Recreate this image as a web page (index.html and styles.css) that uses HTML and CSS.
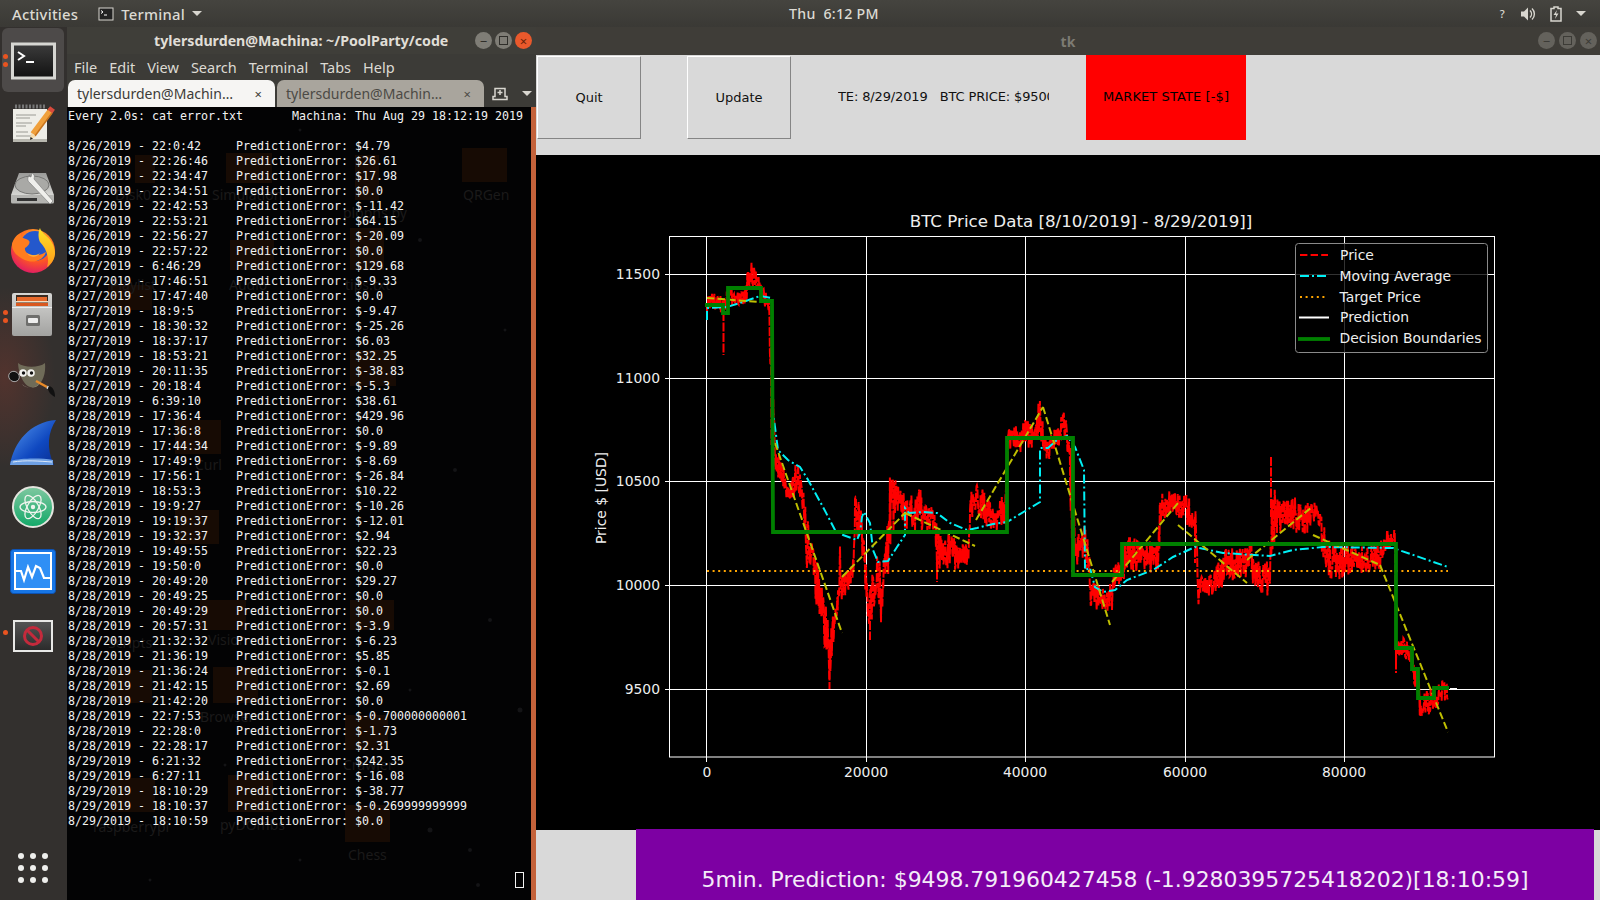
FILE: index.html
```html
<!DOCTYPE html>
<html lang="en">
<head>
<meta charset="UTF-8" />
<title>tk</title>
<link rel="stylesheet" href="styles.css">
</head>
<body>

<!-- gnome top bar -->
<header class="topbar">
  <span class="activities">Activities</span>
  <span class="appmenu">
    <svg width="16" height="14" viewBox="0 0 16 14"><rect x="1" y="1" width="14" height="12" fill="#222" stroke="#d8d6cf"/><path d="M3 3.5l2 1.5-2 1.5M6 8h3" fill="none" stroke="#fff"/></svg>
    Terminal
    <i class="caret"></i>
  </span>
  <span class="clock">Thu&nbsp; 6:12 PM</span>
  <span class="status">
    <span class="help">?</span>
    <svg width="16" height="16" viewBox="0 0 16 16"><path d="M1 5.5h3l4-4v13l-4-4H1z" fill="#d8d6cf"/><path d="M10 4.5c2 2 2 5 0 7M12 2.5c3.2 3 3.2 8 0 11" fill="none" stroke="#d8d6cf" stroke-width="1.4"/></svg>
    <svg width="14" height="16" viewBox="0 0 14 16"><path d="M5 1h4v1.5h3V15H2V2.500h3z" fill="none" stroke="#d8d6cf" stroke-width="1.500"/><path d="M8 4L4.500 9h2.500l-1 4 3.500-5.500H7z" fill="#d8d6cf"/></svg>
    <i class="caret"></i>
  </span>
</header>

<div class="desk">

  <!-- dock -->
  <nav class="dock">
    <div class="slot active">
      <div class="pips"><i></i><i></i></div>
      <svg viewBox="0 0 67 64"><defs><linearGradient id="tg" x1="0" y1="0" x2="0" y2="1"><stop offset="0" stop-color="#3c3c3c"/><stop offset="1" stop-color="#111"/></linearGradient></defs><rect x="12.500" y="16" width="42" height="34" fill="url(#tg)" stroke="#d6d6d2" stroke-width="3"/><path d="M18 24l6 4-6 4" fill="none" stroke="#fff" stroke-width="2"/><path d="M26 34h8" stroke="#fff" stroke-width="2"/></svg>
    </div>
    <div class="slot">
      <svg viewBox="0 0 67 64"><rect x="13" y="17" width="34" height="33" fill="#efeee8"/><rect x="13" y="47" width="34" height="3" fill="#b9b8b0"/><path d="M15 14.500h30" stroke="#777" stroke-width="4" stroke-dasharray="2 1.500"/><path d="M16 23h20M16 26h14M16 31h16M16 34h10M16 40h12M16 44h18" stroke="#9a9a94"/><path d="M33 42L51 18" stroke="#f0a03c" stroke-width="6"/><path d="M35 44L52 21" stroke="#c8741e" stroke-width="1.500"/><path d="M30 48l1-7 5 3.500z" fill="#f3dcb0"/><path d="M30 48l.5-3 2.500 1.500z" fill="#222"/><path d="M50 19.500l2.500-3.500" stroke="#d84a3c" stroke-width="6"/></svg>
    </div>
    <div class="slot">
      <svg viewBox="0 0 67 64"><defs><linearGradient id="dg" x1="0" y1="0" x2="0" y2="1"><stop offset="0" stop-color="#9a9a98"/><stop offset="1" stop-color="#d6d6d3"/></linearGradient></defs><path d="M19 17h27l8 22H11z" fill="url(#dg)"/><path d="M11 39h43v7a1.500 1.500 0 0 1-1.500 1.500h-40A1.500 1.500 0 0 1 11 46z" fill="#b4b4b1"/><path d="M17 42h20v3H17z" fill="#333"/><ellipse cx="32" cy="29" rx="17" ry="9" fill="#a9a9a6" stroke="#777775"/><path d="M30 19c-3 2-3 6 0 8l20 21 3-3-19-22c1-3 0-5-2-6l-1 4-3-1z" fill="#efefec" stroke="#777" stroke-width=".6"/></svg>
    </div>
    <div class="slot">
      <svg viewBox="0 0 67 64"><defs><radialGradient id="fg" cx=".6" cy=".25" r=".85"><stop offset="0" stop-color="#ffc02e"/><stop offset=".55" stop-color="#ff5a1f"/><stop offset="1" stop-color="#d90d75"/></radialGradient><linearGradient id="fy" x1="0" y1="0" x2="0" y2="1"><stop offset="0" stop-color="#ffe226"/><stop offset="1" stop-color="#ff9a1a"/></linearGradient></defs><circle cx="33" cy="31" r="22" fill="url(#fg)"/><circle cx="35" cy="26" r="15" fill="#2458cc"/><path d="M40 8c1 6 14 10 15 24 .3 6-3 12-8 15 3-9-1-19-7-25-2-4-2-10 0-14z" fill="url(#fy)"/><path d="M12 24c2-7 6-10 9-11-1 3 1 5 5 6 7 2 2 7-1 9-1 5 6 8 13 7 4-.5 6-2 8-3-2 7-10 11-18 9-8-2-17-9-16-17z" fill="#ff7d1f"/><path d="M27 33c4 3 9 3 13 0-3 5-10 5-13 0z" fill="#ffb13a"/></svg>
    </div>
    <div class="slot">
      <div class="pips"><i></i><i></i></div>
      <svg viewBox="0 0 67 64"><defs><linearGradient id="cg" x1="0" y1="0" x2="0" y2="1"><stop offset="0" stop-color="#d6d6d4"/><stop offset="1" stop-color="#a2a2a0"/></linearGradient></defs><rect x="12" y="9" width="40" height="43" rx="2" fill="url(#cg)"/><rect x="16" y="11" width="32" height="10" fill="#3a2a20"/><rect x="17" y="13" width="30" height="4" fill="#e86a2c"/><rect x="16" y="17" width="32" height="1.500" fill="#f4dcc0"/><rect x="16" y="19" width="32" height="3" fill="#d9581f"/><rect x="12" y="23" width="40" height="1" fill="#eee"/><rect x="26" y="31" width="14" height="11" rx="1.500" fill="#6f6f6d"/><rect x="28" y="34" width="10" height="5" rx="1" fill="#eee"/></svg>
    </div>
    <div class="slot">
      <svg viewBox="0 0 67 64"><path d="M18 15c6 5 21 5 27 0 1 10-2 20-9 24-9 3-17-8-18-24z" fill="#6f6b58"/><path d="M22 36c5 5 12 5 17 0-3 5-14 5-17 0z" fill="#a8a490"/><ellipse cx="14" cy="28.500" rx="5.500" ry="5" fill="#111" stroke="#bbb" stroke-width=".8" transform="rotate(35 14 28.500)"/><circle cx="23" cy="25" r="3.800" fill="#f2f2ee"/><circle cx="31" cy="25" r="3.800" fill="#f2f2ee"/><circle cx="23.500" cy="25" r="1.700" fill="#111"/><circle cx="31.500" cy="25" r="1.700" fill="#111"/><path d="M36 33l11 6" stroke="#e88a28" stroke-width="2.500"/><path d="M47 39l2 1" stroke="#ddd" stroke-width="3"/><path d="M49 38c4 1 6 5 6 11-4-2-7-5-7-9z" fill="#111"/></svg>
    </div>
    <div class="slot">
      <svg viewBox="0 0 67 64"><defs><linearGradient id="sg" x1="0" y1="0" x2="1" y2="1"><stop offset="0" stop-color="#5a9cf0"/><stop offset=".6" stop-color="#0f48c0"/><stop offset="1" stop-color="#0a2e90"/></linearGradient></defs><path d="M10 53C14 30 30 10 56 8c-8 12-10 28-2 45z" fill="url(#sg)"/><path d="M11 49c10-3 30-3 42-1v5H10z" fill="#6ea0e4"/><path d="M13 50c12-2 26-1 39 0" stroke="#dce8f8" fill="none"/></svg>
    </div>
    <div class="slot">
      <svg viewBox="0 0 67 64"><defs><linearGradient id="ag" x1="0" y1="0" x2="0" y2="1"><stop offset="0" stop-color="#7fc8a0"/><stop offset="1" stop-color="#12a868"/></linearGradient></defs><circle cx="33" cy="31" r="20" fill="url(#ag)" stroke="#e4e4de" stroke-width="2"/><g fill="none" stroke="#f0f4ee" stroke-width="1.300"><ellipse cx="33" cy="31" rx="13" ry="5.500"/><ellipse cx="33" cy="31" rx="13" ry="5.500" transform="rotate(60 33 31)"/><ellipse cx="33" cy="31" rx="13" ry="5.500" transform="rotate(-60 33 31)"/></g><circle cx="33" cy="31" r="2.200" fill="#f0f4ee"/></svg>
    </div>
    <div class="slot">
      <svg viewBox="0 0 67 64"><rect x="10.500" y="9.500" width="45" height="44" rx="3" fill="#1776e6" stroke="#0d52b4"/><rect x="15" y="13" width="36" height="36" fill="#2f8ff5" stroke="#fff" stroke-width="2"/><path d="M15 31h6l3 9 4-13 4 10 4-11 4 2 4 10h7" fill="none" stroke="#fff" stroke-width="2.200"/></svg>
    </div>
    <div class="slot">
      <div class="pips"><i></i></div>
      <svg viewBox="0 0 67 64"><defs><linearGradient id="bg" x1="0" y1="0" x2="0" y2="1"><stop offset="0" stop-color="#555"/><stop offset="1" stop-color="#2a2a2a"/></linearGradient></defs><rect x="14" y="17" width="38" height="30" fill="url(#bg)" stroke="#e8e8e6" stroke-width="2"/><circle cx="33" cy="32" r="8.500" fill="none" stroke="#c42a3c" stroke-width="3"/><path d="M27 26l12 12" stroke="#c42a3c" stroke-width="3"/></svg>
    </div>
    <div class="apps">
      <i></i><i></i><i></i><i></i><i></i><i></i><i></i><i></i><i></i>
    </div>
  </nav>

  <!-- terminal window -->
  <section class="term">
    <div class="term-title">
      <span class="term-name">tylersdurden@Machina: ~/PoolParty/code</span>
      <span class="wbtns">
        <b class="wbtn">&minus;</b>
        <b class="wbtn"><i class="sq"></i></b>
        <b class="wbtn close">&times;</b>
      </span>
    </div>
    <div class="term-menu">
      <span>File</span><span>Edit</span><span>View</span><span>Search</span><span>Terminal</span><span>Tabs</span><span>Help</span>
    </div>
    <div class="tabs">
      <div class="tab on"><span>tylersdurden@Machin…</span><em>×</em></div>
      <div class="tab"><span>tylersdurden@Machin…</span><em>×</em></div>
      <svg class="newtab" width="16" height="16" viewBox="0 0 16 16"><path d="M3 2.500h10v8H15v3H1v-3h2z" fill="none" stroke="#d8d6cf" stroke-width="1.500"/><path d="M8 4v5M5.500 6.500h5" stroke="#d8d6cf" stroke-width="1.500"/></svg>
      <i class="caret tabcaret"></i>
    </div>
    <div class="term-body">
      <!-- desktop icons showing through the transparent terminal -->
      <svg class="ghost" viewBox="67 107 464 793">
        <g class="gs">
          <circle cx="300" cy="130" r="1.500"/><circle cx="420" cy="240" r="2"/><circle cx="505" cy="330" r="1.500"/>
          <circle cx="130" cy="400" r="1.500"/><circle cx="455" cy="470" r="2"/><circle cx="300" cy="560" r="1.500"/>
          <circle cx="490" cy="620" r="2"/><circle cx="410" cy="690" r="1.500"/><circle cx="520" cy="710" r="2.500"/>
          <circle cx="225" cy="765" r="1.500"/><circle cx="430" cy="830" r="2.500"/><circle cx="470" cy="850" r="2"/>
          <circle cx="150" cy="880" r="1.500"/><circle cx="300" cy="860" r="1.500"/><circle cx="478" cy="885" r="2"/>
        </g>
        <g class="gf">
          <rect x="462" y="148" width="45" height="34"/><rect x="226" y="153" width="46" height="30"/>
          <rect x="135" y="155" width="20" height="28"/><rect x="355" y="155" width="24" height="45"/>
          <rect x="108" y="670" width="44" height="33"/><rect x="213" y="667" width="45" height="36"/>
          <rect x="345" y="715" width="43" height="35"/><rect x="110" y="778" width="45" height="34"/>
          <rect x="228" y="775" width="45" height="37"/><rect x="345" y="805" width="45" height="37"/>
          <rect x="108" y="285" width="44" height="25"/><rect x="230" y="240" width="44" height="30"/>
          <rect x="350" y="228" width="34" height="42"/><rect x="175" y="420" width="46" height="34"/>
          <rect x="175" y="510" width="44" height="34"/><rect x="350" y="350" width="46" height="36"/>
          <rect x="200" y="600" width="46" height="30"/><rect x="350" y="600" width="44" height="30"/>
        </g>
        <g class="gt">
          <text x="115" y="200">Disk0</text><text x="212" y="200">Simulation</text><text x="463" y="200">QRGen</text>
          <text x="343" y="218">plophs.py</text><text x="110" y="290">Playlist</text><text x="229" y="290">Audio</text>
          <text x="345" y="290">tips.txt</text><text x="195" y="470">Curl</text><text x="108" y="648">Scripts</text>
          <text x="208" y="645">Vision</text><text x="200" y="722">Browser</text><text x="343" y="770">Crawler</text>
          <text x="93" y="832">raspberrypi</text><text x="220" y="830">pyDOmbs</text><text x="348" y="860">Chess</text>
        </g>
      </svg>
<pre class="term-text">Every 2.0s: cat error.txt       Machina: Thu Aug 29 18:12:19 2019

8/26/2019 - 22:0:42     PredictionError: $4.79
8/26/2019 - 22:26:46    PredictionError: $26.61
8/26/2019 - 22:34:47    PredictionError: $17.98
8/26/2019 - 22:34:51    PredictionError: $0.0
8/26/2019 - 22:42:53    PredictionError: $-11.42
8/26/2019 - 22:53:21    PredictionError: $64.15
8/26/2019 - 22:56:27    PredictionError: $-20.09
8/26/2019 - 22:57:22    PredictionError: $0.0
8/27/2019 - 6:46:29     PredictionError: $129.68
8/27/2019 - 17:46:51    PredictionError: $-9.33
8/27/2019 - 17:47:40    PredictionError: $0.0
8/27/2019 - 18:9:5      PredictionError: $-9.47
8/27/2019 - 18:30:32    PredictionError: $-25.26
8/27/2019 - 18:37:17    PredictionError: $6.03
8/27/2019 - 18:53:21    PredictionError: $32.25
8/27/2019 - 20:11:35    PredictionError: $-38.83
8/27/2019 - 20:18:4     PredictionError: $-5.3
8/28/2019 - 6:39:10     PredictionError: $38.61
8/28/2019 - 17:36:4     PredictionError: $429.96
8/28/2019 - 17:36:8     PredictionError: $0.0
8/28/2019 - 17:44:34    PredictionError: $-9.89
8/28/2019 - 17:49:9     PredictionError: $-8.69
8/28/2019 - 17:56:1     PredictionError: $-26.84
8/28/2019 - 18:53:3     PredictionError: $10.22
8/28/2019 - 19:9:27     PredictionError: $-10.26
8/28/2019 - 19:19:37    PredictionError: $-12.01
8/28/2019 - 19:32:37    PredictionError: $2.94
8/28/2019 - 19:49:55    PredictionError: $22.23
8/28/2019 - 19:50:0     PredictionError: $0.0
8/28/2019 - 20:49:20    PredictionError: $29.27
8/28/2019 - 20:49:25    PredictionError: $0.0
8/28/2019 - 20:49:29    PredictionError: $0.0
8/28/2019 - 20:57:31    PredictionError: $-3.9
8/28/2019 - 21:32:32    PredictionError: $-6.23
8/28/2019 - 21:36:19    PredictionError: $5.85
8/28/2019 - 21:36:24    PredictionError: $-0.1
8/28/2019 - 21:42:15    PredictionError: $2.69
8/28/2019 - 21:42:20    PredictionError: $0.0
8/28/2019 - 22:7:53     PredictionError: $-0.700000000001
8/28/2019 - 22:28:0     PredictionError: $-1.73
8/28/2019 - 22:28:17    PredictionError: $2.31
8/29/2019 - 6:21:32     PredictionError: $242.35
8/29/2019 - 6:27:11     PredictionError: $-16.08
8/29/2019 - 18:10:29    PredictionError: $-38.77
8/29/2019 - 18:10:37    PredictionError: $-0.269999999999
8/29/2019 - 18:10:59    PredictionError: $0.0</pre>
      <i class="cursor"></i>
      <i class="term-scroll"></i>
    </div>
  </section>

  <!-- tk window -->
  <section class="tk">
    <div class="tk-title">
      <span>tk</span>
      <span class="wbtns dim">
        <b class="wbtn">&minus;</b>
        <b class="wbtn"><i class="sq"></i></b>
        <b class="wbtn">&times;</b>
      </span>
    </div>
    <div class="toolbar">
      <button class="tkbtn">Quit</button>
      <button class="tkbtn">Update</button>
      <div class="info">TE: 8/29/2019   BTC PRICE: $9500.00</div>
      <div class="market">MARKET STATE [-$]</div>
    </div>
    <div class="plot">
      <svg class="chart" viewBox="536 155 1064 675">
        <g class="grid">
          <path d="M706.500 236V757M866.500 236V757M1025.500 236V757M1185.500 236V757M1344.500 236V757"/>
          <path d="M670 274.500H1495M670 378.500H1495M670 481.500H1495M670 585.500H1495M670 689.500H1495"/>
          <path d="M706.500 757v5M866.500 757v5M1025.500 757v5M1185.500 757v5M1344.500 757v5"/>
          <path d="M665 274.500h5M665 378.500h5M665 481.500h5M665 585.500h5M665 689.500h5"/>
          <rect x="669.500" y="236.500" width="825" height="520.500"/>
        </g>

        <path id="price" class="price"/>
        <path class="price" d="M723.500 312V355M829.500 640V689M881 590V622M870 600V640M937 560V582M1195 517V563M1271 457V517M1396 650V673"/>

        <polyline class="avg" points="707,320 707,308 727,307 743,302 760,296 772,298 773,413 775,427 778,450 788,460 800,467 807,478 823,507 835,530 843,535 857,540 860,533 862,517 864,512 870,523 873,550 878,562 888,561 897,547 905,535 905,508 909,513 923,512 937,513 950,523 967,530 977,528 993,524 1007,522 1040,502 1040,448 1048,448 1057,440 1067,436 1075,447 1084,470 1085,570 1090,568 1095,587 1103,592 1115,590 1127,580 1153,570 1173,557 1195,547 1223,553 1270,556 1293,550 1323,547 1393,548 1448,567"/>
        <path class="target" d="M707 571H1448"/>
        <g class="trend">
          <path d="M707 298L760 302"/>
          <path d="M775 443L842 633"/>
          <path d="M842 577L905 513"/>
          <path d="M905 513L975 546"/>
          <path d="M976 520L1043 407"/>
          <path d="M1043 407L1110 625"/>
          <path d="M1112 582L1178 503"/>
          <path d="M1178 525L1247 583"/>
          <path d="M1247 560L1312 507"/>
          <path d="M1313 535L1380 565"/>
          <path d="M1380 565L1448 732"/>
        </g>
        <path class="pred" d="M1450 689H1457"/>
        <polyline class="bounds" points="705,305 723,305 723,313 728,313 728,288 761,288 761,301 772,301 773,532 1007,532 1007,438 1073,438 1073,575 1122,575 1122,544 1396,544 1396,648 1412,648 1412,669 1418,669 1418,698 1434,698 1434,688 1449,688"/>

        <text class="title" x="1081" y="227">BTC Price Data [8/10/2019] - 8/29/2019]]</text>
        <text class="ylabel" transform="rotate(-90 606 498)" x="606" y="498">Price $ [USD]</text>
        <g class="tick ty">
          <text x="660" y="279">11500</text><text x="660" y="383">11000</text><text x="660" y="486">10500</text><text x="660" y="590">10000</text><text x="660" y="694">9500</text>
        </g>
        <g class="tick tx">
          <text x="707" y="777">0</text><text x="866" y="777">20000</text><text x="1025" y="777">40000</text><text x="1185" y="777">60000</text><text x="1344" y="777">80000</text>
        </g>

        <rect class="legend" x="1295.500" y="243.500" width="192" height="109" rx="3"/>
        <path class="price key" d="M1300 255H1328"/>
        <path class="avg" d="M1300 276H1328"/>
        <path class="target" d="M1300 297H1328"/>
        <path class="pred" d="M1299 317.500H1329"/>
        <path class="bounds" d="M1298 339H1330"/>
        <g class="tick">
          <text x="1340" y="260">Price</text><text x="1339.500" y="281">Moving Average</text><text x="1339.500" y="302">Target Price</text><text x="1340" y="322">Prediction</text><text x="1339.500" y="343">Decision Boundaries</text>
        </g>
      </svg>
    </div>
    <div class="predbar">
      <div class="predlabel">5min. Prediction: $9498.791960427458 (-1.9280395725418202)[18:10:59]</div>
    </div>
  </section>
</div>

<script src="chart.js"></script>
</body>
</html>
```

FILE: styles.css
```css
html, body {
  margin: 0;
  width: 1600px;
  height: 900px;
  overflow: hidden;
  background: #2c2a29;
}
body {
  display: flex;
  flex-direction: column;
  font-family: "Noto Sans", sans-serif;
}
i, b, em { font-style: normal; font-weight: normal; }

.caret {
  display: inline-block;
  width: 0;
  height: 0;
  border-left: 5px solid transparent;
  border-right: 5px solid transparent;
  border-top: 5px solid #d8d6cf;
}

/* top bar */
.topbar {
  height: 27px;
  flex: none;
  display: flex;
  align-items: center;
  background: linear-gradient(#45443f, #3a3935);
  color: #dcdad3;
  font-size: 14.800px;
  font-weight: 500;
  letter-spacing: .25px;
}
.activities { margin-left: 12px; }
.appmenu {
  margin-left: 20px;
  display: flex;
  align-items: center;
  gap: 7px;
}
.clock { margin-left: 587px; width: 90px; white-space: nowrap; font-size: 14.200px; }
.status {
  margin-left: auto;
  padding-right: 14px;
  display: flex;
  align-items: center;
  gap: 13px;
}
.help { font-size: 11px; margin-right: 2px; }

.desk {
  flex: 1;
  display: flex;
  min-height: 0;
}

/* dock */
.dock {
  width: 67px;
  flex: none;
  display: flex;
  flex-direction: column;
  padding-top: 1px;
  box-sizing: border-box;
  background:
    radial-gradient(ellipse 50px 90px at 5px 350px, rgba(120, 55, 45, .45), transparent),
    #33302e;
}
.slot {
  position: relative;
  height: 64px;
  flex: none;
  border-radius: 6px;
}
.slot svg { display: block; width: 67px; height: 64px; }
.slot.active {
  background: rgba(255, 255, 255, .13);
  margin: 0 3px 0 2px;
}
.slot.active svg { margin-left: -2px; }
.pips {
  position: absolute;
  left: 3px;
  top: 26px;
  display: flex;
  flex-direction: column;
  gap: 3px;
}
.slot.active .pips { left: 1px; }
.pips i {
  width: 5px;
  height: 5px;
  border-radius: 50%;
  background: #e95420;
}
.apps {
  margin: auto 0 17px 18px;
  display: grid;
  grid-template-columns: repeat(3, 6px);
  gap: 6px;
}
.apps i {
  width: 6px;
  height: 6px;
  border-radius: 50%;
  background: #eeeeec;
}

/* window buttons */
.wbtns {
  position: absolute;
  right: 3px;
  top: 5px;
  display: flex;
  gap: 4px;
}
.wbtn {
  width: 17px;
  height: 17px;
  border-radius: 50%;
  background: #7f7d76;
  color: #2f2e2a;
  font-size: 13px;
  line-height: 16px;
  text-align: center;
  display: flex;
  align-items: center;
  justify-content: center;
}
.wbtn.close { background: #e9592c; color: #6a2308; }
.sq {
  width: 7px;
  height: 7px;
  border: 1px solid #2f2e2a;
}
.dim .wbtn { background: #64625c; color: #3c3b36; }
.dim .sq { border-color: #3c3b36; }
.term-title .wbtns { right: 4px; gap: 3px; }

/* terminal */
.term {
  width: 469px;
  flex: none;
  display: flex;
  flex-direction: column;
  background: #3c3b37;
}
.term-title {
  position: relative;
  height: 27px;
  flex: none;
  display: flex;
  align-items: center;
  padding-left: 87px;
  color: #e0ded7;
  font-size: 14.200px;
  font-weight: 700;
  white-space: nowrap;
  background: #3f3e39;
}
.term-menu {
  height: 26px;
  flex: none;
  display: flex;
  align-items: center;
  gap: 12px;
  padding-left: 7px;
  color: #dcdad3;
  font-size: 14.500px;
}
.tabs {
  height: 27px;
  flex: none;
  display: flex;
  align-items: flex-end;
  padding-left: 1px;
  gap: 2px;
  position: relative;
}
.tab {
  width: 207px;
  height: 27px;
  box-sizing: border-box;
  padding: 0 10px 0 9px;
  display: flex;
  align-items: center;
  justify-content: space-between;
  border-radius: 7px 7px 0 0;
  background: #a9a59d;
  color: #4c4a45;
  font-size: 14px;
}
.tab.on { background: #f6f5f3; color: #3d3c38; }
.tab em { font-size: 13px; margin-right: 3px; }
.newtab { margin: 0 0 5px 6px; }
.tabcaret { position: absolute; left: 455px; top: 11px; }

.term-body {
  position: relative;
  flex: 1;
  background: #030304;
  overflow: hidden;
}
.ghost {
  position: absolute;
  left: 0;
  top: 0;
  width: 464px;
  height: 793px;
}
.gs circle { fill: #141416; }
.gf rect { fill: #170b04; }
.gt text {
  font-family: "Noto Sans", sans-serif;
  font-size: 14px;
  fill: #1b1a1a;
}
.term-text {
  position: relative;
  margin: 0;
  padding: 2px 0 0 1px;
  font-family: "DejaVu Sans Mono", monospace;
  font-size: 11.630px;
  line-height: 15px;
  color: #f2f2f2;
}
.cursor {
  position: absolute;
  left: 448px;
  top: 765px;
  width: 7px;
  height: 14px;
  border: 1px solid #f2f2f2;
}
.term-scroll {
  position: absolute;
  right: 0;
  top: 0;
  bottom: 0;
  width: 5px;
  background: #c4623a;
}

/* tk window */
.tk {
  flex: 1;
  display: flex;
  flex-direction: column;
  min-width: 0;
  background: #d9d9d9;
}
.tk-title {
  position: relative;
  height: 28px;
  flex: none;
  display: flex;
  align-items: center;
  justify-content: center;
  background: #3f3d38;
  color: #7d7b73;
  font-size: 14px;
  font-weight: 700;
}
.toolbar {
  height: 100px;
  flex: none;
  display: flex;
  align-items: flex-start;
  background: #d9d9d9;
  color: #111;
  font-family: "DejaVu Sans", sans-serif;
  font-size: 13px;
}
.tkbtn {
  width: 104px;
  height: 83px;
  margin: 1px 0 0 1px;
  padding: 0;
  background: #d9d9d9;
  border: 1px solid;
  border-color: #fff #858585 #858585 #fff;
  font: inherit;
  color: inherit;
}
.tkbtn + .tkbtn { margin-left: 46px; }
.info {
  width: 211px;
  height: 84px;
  margin-left: 47px;
  line-height: 83px;
  white-space: pre;
  overflow: hidden;
  letter-spacing: -.13px;
}
.market {
  width: 160px;
  height: 85px;
  margin-left: 37px;
  line-height: 84px;
  text-align: center;
  background: #ff0000;
  color: #000;
  letter-spacing: .1px;
}

.plot {
  flex: 1;
  background: #000;
  min-height: 0;
}
.chart { display: block; width: 1064px; height: 675px; }
.grid path, .grid rect { fill: none; stroke: #fff; stroke-width: 1; }
.price { fill: none; stroke: #ff0000; stroke-width: 2; stroke-dasharray: 9 1.500; }
.price.key { stroke-dasharray: 7.400 3.200; }
.avg { fill: none; stroke: #00f0f5; stroke-width: 2; stroke-dasharray: 9 3 2 3; }
.target { fill: none; stroke: #ffa500; stroke-width: 2; stroke-dasharray: 2 3.600; }
.trend path { fill: none; stroke: #bfbf00; stroke-width: 2; stroke-dasharray: 7.400 3.200; }
.pred { fill: none; stroke: #fff; stroke-width: 2; }
.bounds { fill: none; stroke: #008000; stroke-width: 3.800; stroke-linejoin: miter; }
.legend { fill: rgba(0, 0, 0, .8); stroke: #8a8a8a; stroke-width: 1; }
.title, .ylabel, .tick text {
  font-family: "DejaVu Sans", sans-serif;
  fill: #eeeeee;
}
.title { font-size: 16.700px; text-anchor: middle; }
.ylabel { font-size: 13.900px; text-anchor: middle; }
.tick { font-size: 13.900px; }
.ty { text-anchor: end; }
.tx { text-anchor: middle; }

.predbar {
  height: 70px;
  flex: none;
  padding-left: 100px;
  padding-right: 6px;
  background: #d9d9d9;
}
.predlabel {
  height: 71px;
  margin-top: -1px;
  box-sizing: border-box;
  padding-top: 37px;
  text-align: center;
  background: #7d00a3;
  color: #f4ecf8;
  font-family: "DejaVu Sans", sans-serif;
  font-size: 21.900px;
  line-height: 28px;
  white-space: nowrap;
}
```

FILE: chart.js
```js
// price trace: [x, top, bottom] in page pixels, noise is filled in between
const trace = [
  [707,295,312],[712,294,308],[720,297,310],[723,300,314],[725,300,315],[729,284,305],[735,296,302],
  [745,290,305],[748,268,295],[751,259,285],[755,270,288],[760,280,292],[765,292,305],[769,295,312],
  [771,310,440],[775,450,480],[780,455,478],[785,470,490],[788,490,510],[792,480,505],[795,454,495],
  [800,470,497],[803,490,520],[806,500,570],[811,540,565],[815,553,602],[820,580,620],[825,600,655],
  [828,620,665],[829.5,640,685],[832,610,660],[835,610,630],[838,590,610],[840,547,585],[842,576,602],
  [848,570,590],[853,560,580],[855,495,540],[860,505,535],[863,520,560],[866,560,600],[870,583,635],
  [873,570,615],[877,545,590],[881,540,622],[885,555,575],[889,480,575],[895,473,520],[900,485,510],
  [905,500,530],[910,500,525],[915,490,540],[920,490,535],[925,505,530],[935,510,530],[937,530,575],
  [943,535,575],[950,535,565],[955,530,570],[960,540,565],[965,545,570],[968,545,565],[970,495,530],
  [976,480,510],[982,490,520],[990,500,530],[995,510,530],[1000,500,525],[1005,495,525],[1008,432,450],
  [1015,425,448],[1020,430,450],[1025,420,447],[1032,425,450],[1037,420,445],[1039,388,430],[1043,425,450],
  [1047,443,467],[1053,425,450],[1058,428,450],[1062,410,437],[1066,418,440],[1068,437,457],[1071,447,530],
  [1075,517,567],[1083,517,560],[1088,540,575],[1093,583,633],[1097,585,610],[1102,580,610],[1107,590,608],
  [1112,583,608],[1115,560,583],[1123,560,583],[1125,537,570],[1137,537,570],[1140,543,570],[1158,543,570],
  [1160,500,543],[1163,493,520],[1175,493,515],[1185,495,522],[1195,505,530],[1197,520,560],[1198,577,605],
  [1203,577,595],[1212,577,595],[1217,565,590],[1222,550,588],[1225,550,580],[1243,550,580],[1249,540,570],
  [1250,517,555],[1252,555,575],[1253,560,587],[1257,563,595],[1270,563,595],[1272,490,560],[1276,490,530],
  [1280,500,533],[1295,497,530],[1305,505,533],[1316,503,520],[1322,517,560],[1330,543,578],[1347,543,578],
  [1353,547,572],[1373,547,572],[1377,543,567],[1383,543,567],[1387,530,547],[1395,530,547],[1396,640,660],
  [1402,640,655],[1407,635,665],[1411,645,665],[1415,663,687],[1418,663,687],[1420,693,722],[1428,690,715],
  [1437,693,712],[1439,680,702],[1448,682,702]
];

let seed = 20190829;
function rnd() {
  seed = (seed * 16807) % 2147483647;
  return seed / 2147483647;
}

let d = '';
for (let i = 0; i < trace.length - 1; i++) {
  const a = trace[i], b = trace[i + 1];
  for (let x = a[0]; x < b[0]; x += 0.45) {
    const t = (x - a[0]) / (b[0] - a[0]);
    const top = a[1] + (b[1] - a[1]) * t - rnd() * 3;
    const bot = a[2] + (b[2] - a[2]) * t + rnd() * 3;
    const y = top + (bot - top) * rnd();
    d += (d ? 'L' : 'M') + x.toFixed(1) + ' ' + y.toFixed(1);
  }
}
document.getElementById('price').setAttribute('d', d);
```
